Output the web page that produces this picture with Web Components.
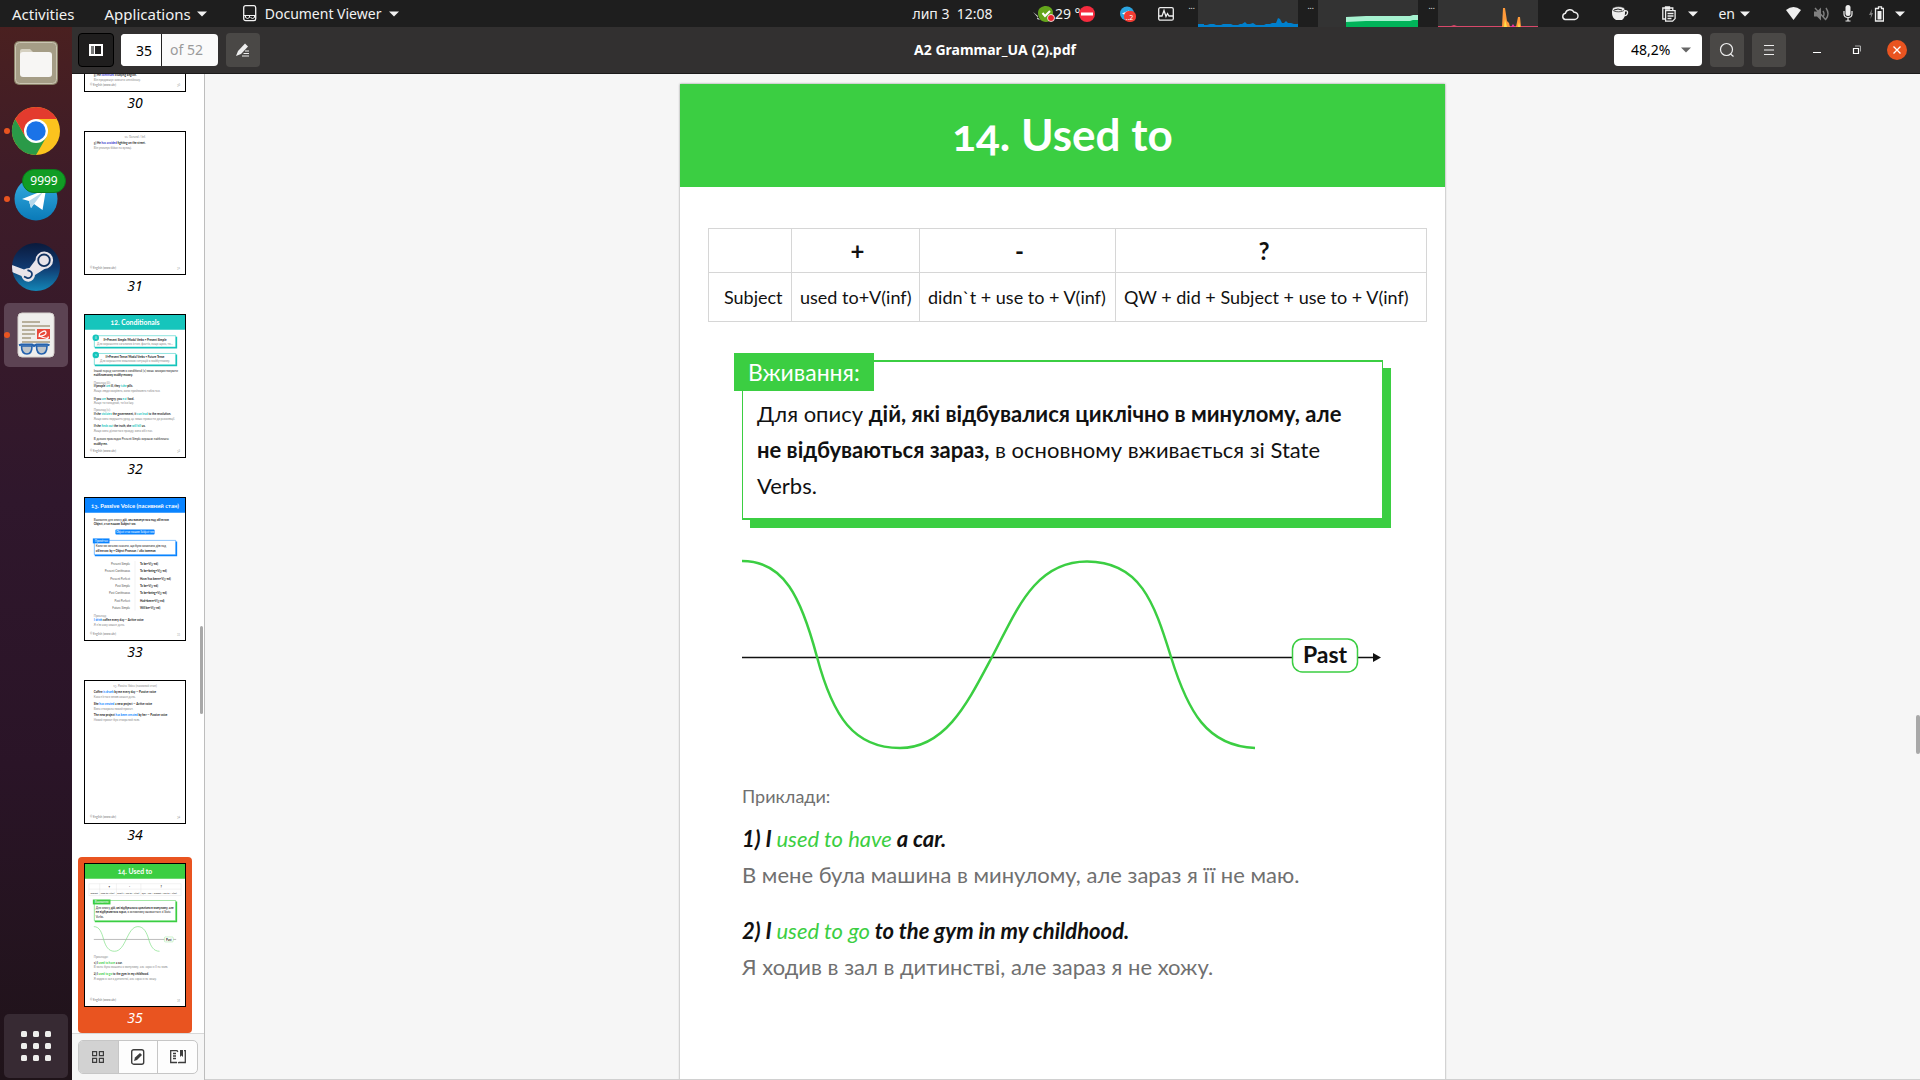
<!DOCTYPE html>
<html lang="uk">
<head>
<meta charset="utf-8">
<title>A2 Grammar_UA (2).pdf</title>
<style>
html, body { margin: 0; height: 100%; }
body { font-family: "Noto Sans", "Open Sans", sans-serif; font-size: 14px; overflow: hidden; background: #f6f6f6; }
</style>
</head>
<body>
<desktop-shell>
  <top-bar slot="top"></top-bar>
  <app-dock slot="dock"></app-dock>
  <viewer-header slot="header" heading="A2 Grammar_UA (2).pdf" page="35" total="52" zoom="48,2%"></viewer-header>
  <thumb-sidebar slot="side">
    <page-thumb number="30"></page-thumb>
    <page-thumb number="31"></page-thumb>
    <page-thumb number="32"></page-thumb>
    <page-thumb number="33"></page-thumb>
    <page-thumb number="34"></page-thumb>
    <page-thumb number="35" selected></page-thumb>
  </thumb-sidebar>
  <doc-view>
    <doc-page heading="14. Used to">
      <grammar-table></grammar-table>
      <note-box label="Вживання:">Для опису <b>дій, які відбувалися циклічно в минулому, але не відбуваються зараз,</b> в основному вживається зі State Verbs.</note-box>
      <wave-chart label="Past"></wave-chart>
      <example-list label="Приклади:">
        <example-item translation="В мене була машина в минулому, але зараз я її не маю.">1) I <span>used to have</span> a car.</example-item>
        <example-item translation="Я ходив в зал в дитинстві, але зараз я не хожу.">2) I <span>used to go</span> to the gym in my childhood.</example-item>
      </example-list>
    </doc-page>
  </doc-view>
</desktop-shell>

<script>
function define(name, render) {
  customElements.define(name, class extends HTMLElement {
    connectedCallback() {
      if (this.shadowRoot) return;
      this.attachShadow({ mode: "open" }).innerHTML = render(this);
    }
  });
}

define("desktop-shell", () => `
<style>
:host { display: flex; flex-direction: column; height: 100vh; }
.body { flex: 1; display: flex; min-height: 0; }
.window { flex: 1; display: flex; flex-direction: column; min-width: 0; }
.panes { flex: 1; display: flex; min-height: 0; }
</style>
<slot name="top"></slot>
<div class="body">
  <slot name="dock"></slot>
  <div class="window">
    <slot name="header"></slot>
    <div class="panes"><slot name="side"></slot><slot></slot></div>
  </div>
</div>`);

const caret = '<svg width="10" height="6" viewBox="0 0 10 6"><path d="M0 0.5h10L5 5.5z" fill="currentColor"/></svg>';

define("top-bar", () => `
<style>
:host { display: flex; align-items: center; height: 27px; background: #1e1e1e; color: #f2f2f2; font-size: 14px; line-height: 20px; white-space: pre; }
svg { display: block; flex: none; }
button { all: unset; display: flex; align-items: center; gap: 6px; }
.left { flex: 1 1 0; display: flex; align-items: center; gap: 30px; padding-left: 12px; font-size: 14px; }
.left .menu { font-size: 15px; }
.left .app { gap: 8px; padding-left: 6px; }
.right { flex: 1 1 0; display: flex; align-items: center; justify-content: flex-end; padding-right: 15px; }
.weather { display: flex; align-items: center; }
.no { margin-left: -10px; }
.dots { align-self: flex-start; font-size: 8px; line-height: 12px; width: 10px; }
.clock { padding-right: 12px; }
</style>
<div class="left"><button class="menu">Activities</button><button class="menu">Applications${caret}</button><button class="app"><svg width="14" height="17" viewBox="0 0 14 17" fill="none" stroke="#f2f2f2"><rect x=".7" y=".7" width="12" height="15" rx="2" stroke-width="1.3"/><path d="M1 10.500h12M2.500 10.500v2q2 2 4 0v-2M7.500 12.500q2 2 4 0v-2"/></svg>Document Viewer${caret}</button></div>
<div class="clock">лип 3  12:08</div>
<div class="right">
  <div class="weather">
    <svg width="22" height="18" viewBox="0 0 22 18"><path d="M0 7l5 4-1 3 3 1z" fill="#ddd"/><path d="M13 1c4 0 7 3 7 7s-2 9-7 9-8-4-8-9 4-7 8-7z" fill="#64a51c"/><path d="M9.500 8l2.500 3 5-5" fill="none" stroke="#fff" stroke-width="2"/><circle cx="18" cy="13" r="3.500" fill="#e8222c" stroke="#fff" stroke-width=".8"/></svg><span>29 °C</span>
    <svg class="no" width="16" height="16" viewBox="0 0 16 16"><circle cx="8" cy="8" r="8" fill="#f52b3e"/><rect x="2" y="6.500" width="12" height="3" fill="#fff"/></svg>
  </div>
  <svg style="margin-left:25px" width="16" height="16" viewBox="0 0 16 16"><circle cx="7" cy="7.500" r="7" fill="#2ca5e0"/><path d="M2 7.500l7-3-1 6z" fill="#fff"/><rect x="4" y="5" width="12" height="11" rx="5" fill="#f23c34"/><text x="5.500" y="13.500" font-size="7" fill="#fff" font-family="Noto Sans">..2</text></svg>
  <svg style="margin-left:22px" width="16" height="14" viewBox="0 0 16 14" fill="none" stroke="#eee" stroke-width="1.300"><rect x=".7" y=".7" width="14.600" height="12.500" rx="1.500"/><path d="M1 9h3l2-5.500 2 6 1.500-3L11 9h4"/></svg>
  <span class="dots" style="margin-left:14px">...</span>
  <svg width="100" height="27" viewBox="0 0 100 27"><path fill="#333" d="M0 0h100v27H0z"/><path fill="#007fcc" d="M0 24h6v1h3l3-1h4l2 1h5l2-1h8l2 1h5l2-1h2l3-2 2 2h3l3-1 3 2h8l2-1h4l2-1h4l2-5 2 1 2 4h2l2-2 2 2h3l3 1h3l3-1v5H0z"/></svg>
  <span class="dots" style="margin-left:9px;margin-right:1px">...</span>
  <svg width="100" height="27" viewBox="0 0 100 27"><path fill="#333" d="M0 0h100v27H0z"/><path fill="#a6f2d0" d="M28 17l20-1h44l3-1h5v12H28z"/><path fill="#00b359" d="M28 22l20-1h44l3-1h5v7H28z"/></svg>
  <span class="dots" style="margin-left:10px">...</span>
  <svg width="100" height="27" viewBox="0 0 100 27"><path fill="#333" d="M0 0h100v27H0z"/><path fill="#d8486a" d="M0 26h13l3-1 3 1h81v1H0z"/><path fill="#ff9a3a" d="M64 27l1-19h2l2 13 2 2 1 4zM78 27l1-5 1-5h2l1 10z"/><path fill="#ffe14a" d="M66 27l1-8 2 8zM80 27l1-5 1 5z"/><path fill="#f032a0" d="M73 27l2-3 2 3z"/></svg>
  <svg style="margin-left:23px" width="18" height="14" viewBox="0 0 18 14"><path d="M4 12.500a3.200 3.200 0 0 1 .4-6.200A4.600 4.600 0 0 1 13 5.300a3.600 3.600 0 0 1 .8 7.200z" fill="none" stroke="#eee" stroke-width="1.400"/></svg>
  <svg style="margin-left:33px" width="17" height="15" viewBox="0 0 17 15"><path d="M0 3h13v4q0 5-3 7H4Q0 12 0 7z" fill="#eee"/><ellipse cx="6.500" cy="3.200" rx="6.300" ry="2.600" fill="#eee" stroke="#1e1e1e" stroke-width=".7"/><path d="M2 4q4-2 8 0" stroke="#1e1e1e" fill="none"/><path d="M12 5q4-1 3.500 2T11 10" fill="none" stroke="#eee" stroke-width="1.400"/></svg>
  <svg style="margin-left:33px" width="14" height="16" viewBox="0 0 14 16" fill="none" stroke="#eee" stroke-width="1.300"><path d="M3 13H.8V2h10v2M3.500 1h4v2h-4z"/><path d="M3.600 4.600h9.500v8l-2.500 2.500h-7zM5.500 7.500h6M5.500 10h6M5.500 12.500h4"/></svg>
  <span style="margin-left:12px">${caret}</span>
  <button style="margin-left:20px;gap:5px">en${caret}</button>
  <svg style="margin-left:36px" width="15" height="13" viewBox="0 0 15 13"><path d="M0 3Q7.500-3 15 3L7.500 13z" fill="#eee"/></svg>
  <svg style="margin-left:13px" width="15" height="14" viewBox="0 0 15 14" fill="none" stroke="#808080" stroke-width="1.400"><path d="M0 4.500h3l4-4v13l-4-4H0z" fill="#808080" stroke="none"/><path d="M1 1l11 12M9 4q2 3 0 6M12 1q4 6 0 11"/></svg>
  <svg style="margin-left:14px" width="10" height="17" viewBox="0 0 10 17"><rect x="2.500" y="0" width="5" height="11" rx="2.500" fill="#eee"/><path d="M1 6v3q0 3.500 4 3.500T9 9V6M5 12v4M2.500 16h5" fill="none" stroke="#eee" stroke-width="1.200"/></svg>
  <svg style="margin-left:16px" width="15" height="16" viewBox="0 0 15 16"><path d="M3 3L0 9h2l-.5 4L4 7H2.500z" fill="#808080"/><path d="M7.500 2.500h2V.8h3v1.700h2v12.500h-8v-12.500z" fill="none" stroke="#eee" stroke-width="1.300"/><path d="M8.500 5h4v8.500h-4z" fill="#eee"/></svg>
  <span style="margin-left:11px">${caret}</span>
</div>`);

const icons = {
files: `<rect x="10" y="10" width="44" height="44" rx="5" fill="#8b8168"/><rect x="11.500" y="11.500" width="41" height="41" rx="4" fill="#a59d86" stroke="#cbc6b4"/><path d="M16 20q0-2 2-2h8l4 4h10v12H16z" fill="#d5d0c0"/><rect x="16" y="21" width="32" height="25" rx="3" fill="#f7f6f4"/>`,
chrome: `<circle cx="32" cy="32" r="24" fill="#fcc31e"/><path d="M32 32L11.200 20A24 24 0 0 1 52.800 20z" fill="#e33b2e"/><path d="M32 20h20.800L44 32z" fill="#fcc31e"/><path d="M11.200 20A24 24 0 0 0 32 56L42.400 38 32 32 21.600 38z" fill="#2a9a48"/><path d="M11.200 20L21.600 38 32 32V20z" fill="#e33b2e"/><circle cx="32" cy="32" r="12" fill="#fff"/><circle cx="32" cy="32" r="9.700" fill="#1a73e8"/>`,
telegram: `<defs><linearGradient id="t" x2="0" y2="1"><stop stop-color="#37aee2"/><stop offset="1" stop-color="#0a7ab8"/></linearGradient></defs><circle cx="32" cy="32" r="21.500" fill="url(#t)"/><path d="M18 32L42 22.500 38.500 43 30 37l-3 4-2-7z" fill="#fff"/><path d="M25 34l14-9-9 12-3 4z" fill="#b5d8ec"/>`,
steam: `<defs><linearGradient id="s" x2="0" y2="1"><stop stop-color="#0a1a3c"/><stop offset=".5" stop-color="#10386e"/><stop offset="1" stop-color="#1387b8"/></linearGradient><clipPath id="c"><circle cx="32" cy="32" r="24"/></clipPath></defs><circle cx="32" cy="32" r="24" fill="url(#s)"/><g clip-path="url(#c)"><path d="M7 29.500L20 34.500Q22 33 25.500 33L31.500 25A8.800 8.800 0 1 1 40.500 34L31 40A6.800 6.800 0 0 1 17.500 41L7 36.500z" fill="#e8e4ea"/></g><circle cx="40" cy="25.300" r="5.800" fill="#e8e4ea" stroke="#10305f" stroke-width="1.800"/><path d="M20 41.500l3 1.300a3.700 3.700 0 1 0 2.500-7l-2-.6" fill="none" stroke="#123a70" stroke-width="1.800"/>`,
evince: `<rect x="14" y="10" width="36" height="44" rx="4" fill="#efeeec" stroke="#d6d2ce"/><path d="M18 19h18M18 23h28M18 27h13M18 31h13M18 35h9M18 39h28" stroke="#b8b09c" stroke-width="2"/><rect x="33" y="26" width="13" height="10" fill="#e8483a"/><path d="M34.500 33.500q8-1 7.500-4t-5 0 2 5 5-1" fill="none" stroke="#fff" stroke-width="1.300"/><path d="M17.500 43h10.500q0 8-5 8-5.500 0-5.500-8zM32.500 43H43q0 8-5.500 8-5 0-5-8z" fill="#a9b4be" fill-opacity=".7" stroke="#2462ae" stroke-width="1.600"/><path d="M15 42.300l2.500-.8H28l2 1.500 2.500-1.500H43l2.500.8" fill="none" stroke="#2462ae" stroke-width="2.200"/>`
};

define("dock-item", el => `
<style>
:host { display: block; position: relative; width: 64px; height: 64px; border-radius: 5px; }
:host([active]) { background: #5c4353; }
button { all: unset; display: block; }
svg { display: block; }
.dot { position: absolute; left: 0; top: 29px; width: 6px; height: 6px; border-radius: 3px; background: #e95420; }
.badge { position: absolute; left: 18px; top: 2px; width: 44px; height: 24px; box-sizing: border-box; border: 1px solid #0b7a1c; border-radius: 12px; background: #119c24; color: #fff; font-size: 12px; line-height: 22px; text-align: center; }
</style>
<button aria-label="${el.getAttribute("icon")}"><svg width="64" height="64" viewBox="0 0 64 64">${icons[el.getAttribute("icon")]}</svg></button>
${el.hasAttribute("running") ? '<span class="dot"></span>' : ""}
${el.hasAttribute("badge") ? `<span class="badge">${el.getAttribute("badge")}</span>` : ""}`);

define("app-dock", () => `
<style>
:host { display: flex; flex-direction: column; gap: 4px; box-sizing: border-box; width: 72px; padding: 4px 4px 2px; background: linear-gradient(#4a2020, #3e1c28 14%, #2f172c 45%, #2a1427 70%, #1f1319); }
button { all: unset; margin-top: auto; width: 64px; height: 64px; border-radius: 5px; background: #372a33; }
svg { display: block; }
</style>
<dock-item icon="files"></dock-item>
<dock-item icon="chrome" running></dock-item>
<dock-item icon="telegram" running badge="9999"></dock-item>
<dock-item icon="steam"></dock-item>
<dock-item icon="evince" running active></dock-item>
<button aria-label="Show applications"><svg width="64" height="64" viewBox="0 0 64 64" fill="#eeeeec">${[17, 29, 41].map(y => [17, 29, 41].map(x => `<rect x="${x}" y="${y}" width="6" height="6" rx="1.500"/>`).join("")).join("")}</svg></button>`);

define("viewer-header", el => `
<style>
:host { display: flex; align-items: center; box-sizing: border-box; height: 47px; padding: 0 13px 0 6px; background: #323030; border-bottom: 1px solid #1b1a1a; color: #fff; }
.side { flex: 1 1 0; display: flex; align-items: center; }
.end { justify-content: flex-end; }
button { all: unset; box-sizing: border-box; width: 34px; height: 34px; border-radius: 4px; background: #4a4846; display: flex; align-items: center; justify-content: center; }
.toggle { width: 36px; background: #1f1e1e; border: 1px solid #000; }
.pages { display: flex; margin: 0 8px 0 7px; height: 32px; width: 97px; border-radius: 4px; overflow: hidden; background: #fafafa; }
input { all: unset; box-sizing: border-box; width: 41px; padding-right: 9px; border-right: 1px solid #222; background: #fff; color: #000; text-align: right; font-size: 14px; }
label { padding-left: 8px; line-height: 32px; color: #9a9a9a; }
h1 { margin: 0; font-size: 14px; line-height: 20px; padding-left: 5px; }
.zoom { position: relative; display: flex; align-items: center; margin-right: 8px; color: #666; }
.zoom svg { position: absolute; right: 11px; }
select { all: unset; box-sizing: border-box; width: 88px; height: 32px; padding-left: 17px; border-radius: 4px; background: #fff; color: #000; font-size: 14px; line-height: 32px; }
.menu { margin-left: 8px; }
.win { background: none; width: 20px; height: 20px; margin-left: 20px; }
.first { margin-left: 21px; }
.close { background: #e95420; border-radius: 10px; }
</style>
<div class="side">
  <button class="toggle" aria-label="Side pane"><svg width="14" height="12" viewBox="0 0 14 12"><rect x="1" y="1" width="12" height="10" fill="none" stroke="#fff" stroke-width="2"/><path d="M2 2h3v8H2z" fill="#777"/><path d="M5 1h1v10H5z" fill="#fff"/></svg></button>
  <div class="pages"><input id="p" value="${el.getAttribute("page")}"><label for="p">of ${el.getAttribute("total")}</label></div>
  <button aria-label="Annotate"><svg width="16" height="16" viewBox="0 0 16 16"><path d="M1 14l2-5 7-7.500 3 3L6 12z" fill="#eee"/><path d="M10 9h4M8.500 11.500H14M7 14h7" stroke="#eee" stroke-width="1.200"/></svg></button>
</div>
<h1>${el.getAttribute("heading")}</h1>
<div class="side end">
  <div class="zoom"><select aria-label="Zoom"><option>${el.getAttribute("zoom")}</option></select>${caret}</div>
  <button aria-label="Find"><svg width="16" height="16" viewBox="0 0 16 16" fill="none" stroke="#eee" stroke-width="1.200"><circle cx="7.500" cy="7.500" r="6"/><path d="M11.500 12l3 2.500"/></svg></button>
  <button class="menu" aria-label="Menu"><svg width="12" height="12" viewBox="0 0 12 12"><path d="M1 1.500h10M1 6h10M1 10.500h10" stroke="#eee"/></svg></button>
  <button class="win first" aria-label="Minimise"><svg width="10" height="10" viewBox="0 0 10 10"><path d="M1 7.500h8" stroke="#fff"/></svg></button>
  <button class="win" aria-label="Restore"><svg width="10" height="10" viewBox="0 0 10 10" fill="none"><path d="M3 1h5.500v5.500" stroke="#aaa"/><path d="M1.500 3.500h5v5h-5z" stroke="#fff" stroke-width="1.200"/></svg></button>
  <button class="win close" aria-label="Close"><svg width="10" height="10" viewBox="0 0 10 10"><path d="M1.500 1.500l7 7M8.500 1.500l-7 7" stroke="#fff" stroke-width="1.300"/></svg></button>
</div>`);

/* Miniature page drawings. t(x, y, text, attrs) places one line of tiny text. */
const t = (x, y, s, a = "") => `<text x="${x}" y="${y}" ${a}>${s}</text>`;
const G = 'fill="#888"', B = 'font-weight="bold"', M = 'text-anchor="middle"';
const foot = n => t(5, 139, "© English (www.ukr)", 'fill="#777"') + t(97, 139, n, 'fill="#999" text-anchor="end"');
const head = (s, c, size = 7) => `<path d="M0 0h102v15H0z" fill="${c}"/>` + t(51, 10, s, `fill="#fff" font-size="${size}" ${B} ${M}`);
const mark = (s, c) => `<tspan fill="${c}">${s}</tspan>`;
const panel = (y, h, c) => `<path d="M10 ${y + 1}h84v${h}H10z" fill="${c}"/><path d="M9.500 ${y}h83v${h - .5}h-83z" fill="#fff" stroke="${c}" stroke-width=".5"/>`;
const TEAL = "#16c5bc", BLUE = "#0a84ff", GREEN = "#3bce42";
const thumbs = {
30: t(9, 129, "5) He " + mark("continues", "#33c") + " studying English.", B) + t(9, 134, "Він продовжує вивчати англійську.", G) + foot(30),
31: t(51, 6, "11. Gerund / Inf.", G + M) + t(9, 12, "5) He " + mark("has avoided", "#33c") + " fighting on the street.", B) + t(9, 17, "Він уникнув бійки на вулиці.", G) + foot(31),
32: head("12. Conditionals", TEAL) + panel(21, 12, TEAL) + panel(39, 12, TEAL)
  + `<circle cx="11" cy="23" r="3.300" fill="${TEAL}"/><circle cx="11" cy="40.500" r="3.300" fill="${TEAL}"/>` + t(11, 24, "0", 'fill="#fff" ' + M) + t(11, 41.5, "1", 'fill="#fff" ' + M)
  + t(51, 26.5, "If+Present Simple/Modal Verbs + Present Simple", B + M) + t(51, 30.5, "Для вираження загальних істин, фактів, якщо щось, то…", G + M)
  + t(51, 43.500, "If+Present Tense/Modal Verbs + Future Tense", B + M) + t(51, 48, "Для вираження можливих ситуацій в майбутньому.", G + M)
  + t(9, 57.500, "Інший перед частиною в conditional (1) може використовувати") + t(9, 62, "найближчому майбутньому.", B)
  + t(9, 69.500, "Приклад (0):", G) + t(9, 73.500, "If people " + mark("are", TEAL) + " ill, they " + mark("take", TEAL) + " pills.", B) + t(9, 78, "Якщо люди хворіють, вони приймають таблетки.", G)
  + t(9, 86, "If you " + mark("are", TEAL) + " hungry, you " + mark("eat", TEAL) + " food.", B) + t(9, 90.500, "Якщо ти голодний, ти їси їжу.", G)
  + t(9, 97.500, "Приклад (1):", G) + t(9, 101.500, "If she " + mark("violates", TEAL) + " the government, it " + mark("can lead", TEAL) + " to the revolution.", B) + t(9, 106.500, "Якщо вона порушить уряд, це може привести до революції.", G)
  + t(9, 113.500, "If she " + mark("finds out", TEAL) + " the truth, she " + mark("will kill", TEAL) + " us.", B) + t(9, 118.500, "Якщо вона дізнається правду, вона вб’є нас.", G)
  + t(9, 127, "В деяких прикладах Present Simple виражає найближче") + t(9, 131.500, "майбутнє.", B) + foot(32),
33: head("13. Passive Voice (пасивний стан)", BLUE, 6)
  + t(9, 23, 'Вживання для опису <tspan font-weight="bold">дій, яка виконується над об’єктом</tspan>') + t(9, 27.500, "Object, стає нашим Subject-ом.", B)
  + `<rect x="31" y="32" width="40" height="5" rx="1" fill="${BLUE}"/>` + t(51, 35.600, "Object стає нашим Subject-ом", 'font-size="2.800" fill="#fff" ' + M)
  + panel(43, 15, BLUE) + `<path d="M8 41h17v5H8z" fill="${BLUE}"/>` + t(10, 44.600, "Примітка:", 'fill="#fff"')
  + t(11, 50, "Коли ми хочемо сказати, що було виконано дію над") + t(11, 54.500, "об’єктом: by + Object Pronoun / або іменник", B)
  + [["Present Simple", "To be+V(3-ed)"], ["Present Continuous", "To be+being+V(3-ed)"], ["Present Perfect", "Have/has been+V(3-ed)"], ["Past Simple", "To be+V(3-ed)"], ["Past Continuous", "To be+being+V(3-ed)"], ["Past Perfect", "Had+been+V(3-ed)"], ["Future Simple", "Will be+V(3-ed)"]].map((r, i) => t(46, 68 + i * 7.400, r[0], 'text-anchor="end" fill="#555"') + t(56, 68 + i * 7.400, r[1], B)).join("")
  + '<path d="M51 64v50" stroke="#ddd" stroke-width=".4"/>'
  + t(9, 121, "Приклад:", G) + t(9, 125, mark("I drink", BLUE) + " coffee every day — Active voice", B) + t(9, 130, "Я п’ю каву кожен день.", G) + foot(33),
34: t(51, 6, "13. Passive Voice (пасивний стан)", G + M) + t(9, 12, "Coffee " + mark("is drunk", BLUE) + " by me every day — Passive voice", B) + t(9, 17, "Кава п’ється мною кожен день.", G)
  + t(9, 24, "She " + mark("has created", BLUE) + " a new project — Active voice", B) + t(9, 29, "Вона створила новий проєкт.", G)
  + t(9, 36, "The new project " + mark("has been created", BLUE) + " by her — Passive voice", B) + t(9, 41, "Новий проєкт був створений нею.", G) + foot(34),
35: head("14. Used to", GREEN)
  + '<path d="M4 20h94v12H4zM4 25.500h94M15 20v12M32 20v12M57 20v12" fill="none" stroke="#ddd" stroke-width=".4"/>'
  + t(24, 24, "+", B) + t(45, 24, "-", B) + t(77, 24, "?", B)
  + '<g font-size="2.300">' + t(5.500, 30, "Subject") + t(16, 30, "used to+V(inf)") + t(33, 30, "didn`t + use to + V(inf)") + t(58, 30, "QW + did + Subject + use to + V(inf)") + '</g>'
  + panel(37, 21, GREEN) + `<path d="M8 36h18v5H8z" fill="${GREEN}"/>` + t(10, 39.600, "Вживання:", 'fill="#fff"')
  + t(11, 45.500, 'Для опису <tspan font-weight="bold">дій, які відбувалися циклічно в минулому, але</tspan>') + t(11, 50, '<tspan font-weight="bold">не відбуваються зараз,</tspan> в основному вживається зі State') + t(11, 54.500, "Verbs.")
  + '<path d="M9 76.500h84" stroke="#777" stroke-width=".5"/><path d="M9 63.500c6 0 8 6 10 13s5 12 11 12 9-6 12-12 6-13 12-13 9 6 11 13 5 12 11 12" fill="none" stroke="#7fdf84" stroke-width=".7"/><rect x="81" y="74" width="9" height="5" rx="1" fill="#fff" stroke="#7fdf84" stroke-width=".4"/>' + t(85.5, 77.600, "Past", B + M)
  + t(9, 95.500, "Приклади:", G) + t(9, 101, "1) I " + mark("used to have", GREEN) + " a car.", B) + t(9, 105.500, "В мене була машина в минулому, але зараз я її не маю.", G)
  + t(9, 113, "2) I " + mark("used to go", GREEN) + " to the gym in my childhood.", B) + t(9, 118, "Я ходив в зал в дитинстві, але зараз я не хожу.", G) + foot(35)
};

define("page-thumb", el => `
<style>
:host { display: flex; flex: none; flex-direction: column; align-items: center; box-sizing: border-box; width: 114px; height: 176px; padding-top: 6px; border-radius: 4px; color: #000; }
:host([selected]) { background: #e95420; color: #fff; }
.sheet { box-sizing: border-box; width: 102px; height: 144px; border: 1px solid #000; background: #fff; }
svg { display: block; width: 100%; height: 100%; font-family: Lato, "Noto Sans", sans-serif; font-size: 3px; font-variant-numeric: oldstyle-nums; }
span { font-style: italic; font-size: 14px; line-height: 22px; }
</style>
<div class="sheet"><svg viewBox="0 0 102 144" preserveAspectRatio="none" fill="#222">${thumbs[el.getAttribute("number")]}</svg></div>
<span>${el.getAttribute("number")}</span>`);

define("thumb-sidebar", () => `
<style>
:host { display: flex; flex-direction: column; flex: none; box-sizing: border-box; width: 133px; background: #fff; border-right: 1px solid #bdbdbd; }
.list { position: relative; flex: 1; display: flex; flex-direction: column; justify-content: flex-end; gap: 7px; min-height: 0; padding-left: 6px; overflow: hidden; }
.bar { position: absolute; right: 1px; top: 552px; width: 3px; height: 88px; border-radius: 2px; background: #a8a8a8; }
.tools { display: flex; padding: 6px; border-top: 1px solid #d8d8d8; background: #f6f6f6; }
.group { display: flex; flex: 1; border: 1px solid #c6c6c6; border-radius: 5px; overflow: hidden; background: #fdfdfd; }
button { all: unset; flex: 1; height: 32px; display: flex; align-items: center; justify-content: center; border-right: 1px solid #c6c6c6; }
button:first-child { background: #d2d2d2; }
button:last-child { border-right: 0; }
</style>
<div class="list"><slot></slot><div class="bar"></div></div>
<div class="tools"><div class="group">
  <button aria-label="Thumbnails"><svg width="12" height="12" viewBox="0 0 12 12" fill="none" stroke="#3d3d3d" stroke-width="1.200"><path d="M.6.6h4v4h-4zM7.400.6h4v4h-4zM.6 7.400h4v4h-4zM7.400 7.400h4v4h-4z"/></svg></button>
  <button aria-label="Annotations"><svg width="14" height="16" viewBox="0 0 14 16"><rect x=".7" y=".7" width="12" height="14.500" rx="2" fill="none" stroke="#3d3d3d" stroke-width="1.400"/><path d="M3 12l1-3.500L9 4l2 2-5 5z" fill="#3d3d3d"/></svg></button>
  <button aria-label="Bookmarks"><svg width="16" height="14" viewBox="0 0 16 14" fill="none" stroke="#3d3d3d" stroke-width="1.300"><path d="M7 12.500H.7V.7H7l1 1M8 13l1-.5h6.300V.7H14"/><path d="M3 3.500h3M3 6h3M3 8.500h3"/><path d="M10 0h3v7l-1.500-1.500L10 7z" fill="#3d3d3d" stroke="none"/></svg></button>
</div></div>`);

define("doc-view", () => `
<style>
:host { position: relative; display: block; flex: 1; box-sizing: border-box; min-width: 0; padding-top: 10px; overflow: hidden; background: #f6f6f6; border-bottom: 1px solid #d0d0d0; }
.bar { position: absolute; right: 0; top: 641px; width: 4px; height: 39px; border-radius: 2px; background: #a8a8a8; }
</style>
<slot></slot><div class="bar"></div>`);

define("doc-page", el => `
<style>
:host { display: block; width: 765px; max-width: 100%; height: 1082px; margin: 0 auto; background: #fff; box-shadow: 0 0 2px #8a8a8a; color: #111; font-family: Lato, "Noto Sans", sans-serif; font-size: 22px; line-height: 36px; }
h2 { margin: 0; padding: 18px 0 21px; background: #3bce42; color: #fff; font-size: 44px; line-height: 64px; text-align: center; font-variant-numeric: oldstyle-nums; }
</style>
<h2>${el.getAttribute("heading")}</h2>
<slot></slot>`);

define("grammar-table", () => `
<style>
:host { display: block; padding: 41px 18px 0 28px; }
table { width: 100%; border-collapse: collapse; font-size: 18px; line-height: 24px; table-layout: fixed; }
th, td { box-sizing: border-box; border: 1px solid #d6d6d6; padding: 12px 0 12px 8px; text-align: left; white-space: nowrap; font-weight: normal; }
thead th { padding: 7px 0 6px 4px; text-align: center; font-size: 24px; line-height: 30px; font-weight: bold; }
thead th:last-child { padding-right: 18px; }
tbody th { padding-left: 15px; }
.a { width: 83px; } .b { width: 128px; } .c { width: 196px; }
</style>
<table>
<colgroup><col class="a"><col class="b"><col class="c"><col></colgroup>
<thead><tr><th></th><th>+</th><th>-</th><th>?</th></tr></thead>
<tbody><tr><th>Subject</th><td>used to+V(inf)</td><td>didn\`t + use to + V(inf)</td><td>QW + did + Subject + use to + V(inf)</td></tr></tbody>
</table>`);

define("note-box", el => `
<style>
:host { display: block; position: relative; margin: 38px 62px 0; padding: 34px 24px 14px 14px; border: 2px solid #3bce42; border-width: 2px 1px; background: #fff; box-shadow: 8px 8px 0 #3bce42; }
.label { position: absolute; left: -9px; top: -9px; padding: 0 14px; background: #3bce42; color: #fff; font-size: 23px; line-height: 38px; }
</style>
<span class="label">${el.getAttribute("label")}</span><slot></slot>`);

define("wave-chart", el => `
<style>
:host { display: block; margin: 37px 62px 0; }
svg { display: block; width: 100%; height: auto; overflow: visible; font-weight: bold; }
</style>
<svg viewBox="0 0 641 194" fill="none">
  <path d="M0 100.500h633" stroke="#111" stroke-width="1.500"/><path d="M631 96l8 4.500-8 4.500z" fill="#111"/>
  <path d="M0 4C42 4 59 40 75 100S112 191 158 191S226 145 250 100S292 4.500 345 4.500S412 45 429 100S465 189 513 191" stroke="#3bce42" stroke-width="2.500"/>
  <rect x="550.500" y="82" width="65" height="33" rx="10" fill="#fff" stroke="#3bce42" stroke-width="1.500"/>
  <text x="583" y="106" font-size="23" text-anchor="middle" fill="#111">${el.getAttribute("label")}</text>
</svg>`);

define("example-list", el => `
<style>
:host { display: flex; flex-direction: column; gap: 20px; margin: 27px 62px 0; }
p { margin: 0 0 -13px; color: #707070; font-size: 18px; line-height: 36px; }
</style>
<p>${el.getAttribute("label")}</p><slot></slot>`);

define("example-item", el => `
<style>
:host { display: block; }
.en { font-style: italic; font-weight: bold; }
.ua { color: #707070; }
::slotted(span) { color: #3bce42; font-weight: normal; }
</style>
<div class="en"><slot></slot></div><div class="ua">${el.getAttribute("translation")}</div>`);
</script>
</body>
</html>
